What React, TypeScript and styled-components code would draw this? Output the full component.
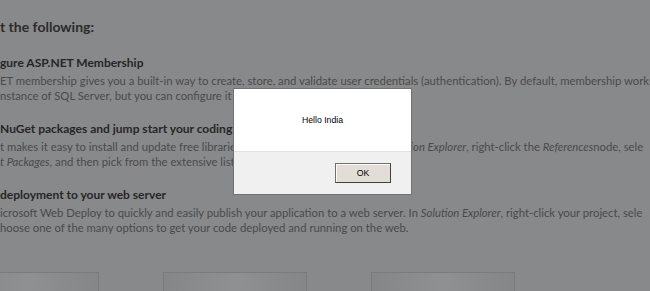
import React from 'react';
import styled, { createGlobalStyle } from 'styled-components';

const GlobalStyle = createGlobalStyle`
  html, body {
    margin: 0;
    padding: 0;
    background: #88898a;
    overflow: hidden;
  }
`;

const Page = styled.div`
  position: relative;
  width: 650px;
  height: 291px;
  overflow: hidden;
  background: #88898a;
  font-family: Lato, 'Open Sans', sans-serif;
`;

const Content = styled.div`
  padding-top: 17px;
  display: flex;
  flex-direction: column;
`;

const Title = styled.h3`
  margin: 0 0 18px 0;
  font-size: 14px;
  line-height: 20px;
  font-weight: 700;
  color: #2b2b2b;
  white-space: nowrap;
`;

const Section = styled.div`
  margin-bottom: 18px;
`;

const Heading = styled.h4`
  margin: 0 0 2px 0;
  font-size: 12px;
  line-height: 16px;
  font-weight: 700;
  color: #262626;
  white-space: nowrap;
`;

const Line = styled.p`
  margin: 0;
  font-size: 11.3px;
  line-height: 15px;
  color: #4a4a4a;
  white-space: nowrap;
`;

const Boxes = styled.div`
  display: flex;
  gap: 64px;
  margin-left: -45px;
  margin-top: 19px;
`;

const Box = styled.div`
  width: 142px;
  height: 60px;
  flex: none;
  border: 1px solid #7b7b7c;
  background: linear-gradient(90deg, #858687 0%, #8f9091 50%, #858687 100%);
`;

const Dialog = styled.div`
  position: absolute;
  left: 234px;
  top: 89px;
  width: 177px;
  height: 105px;
  display: flex;
  flex-direction: column;
  background: #ffffff;
  box-shadow: 0 0 0 1px #727272;
  font-family: 'Liberation Sans', Arial, sans-serif;
`;

const Message = styled.div`
  height: 62px;
  display: flex;
  align-items: center;
  justify-content: center;
  font-size: 8.7px;
  color: #000;
`;

const Footer = styled.div`
  flex: 1;
  display: flex;
  align-items: center;
  justify-content: flex-end;
  padding-right: 20px;
  background: #f0f0f0;
  border-top: 1px solid #dfdfdf;
`;

const OkButton = styled.button`
  width: 56px;
  height: 20px;
  padding: 0;
  font-family: 'Liberation Sans', Arial, sans-serif;
  font-size: 8.7px;
  color: #000;
  background: #e2ddd7;
  border: 1px solid #707070;
  border-right-color: #404040;
  border-bottom-color: #404040;
  box-shadow: inset 1px 1px 0 #fbfaf8;
`;

export default function App() {
  return (
    <Page>
      <GlobalStyle />
      <Content>
        <Title>t the following:</Title>
        <Section>
          <Heading>gure ASP.NET Membership</Heading>
          <Line>
            ET membership gives you a built-in way to create, store, and validate user credentials (authentication). By default, membership works
          </Line>
          <Line>nstance of SQL Server, but you can configure it to work with any data store.</Line>
        </Section>
        <Section>
          <Heading>NuGet packages and jump start your coding</Heading>
          <Line>
            t makes it easy to install and update free libraries and tools for your project. In <i>Solution Explorer</i>, right-click the <i>References</i>node, sele
          </Line>
          <Line>
            <i>t Packages</i>, and then pick from the extensive list of packages.
          </Line>
        </Section>
        <Section>
          <Heading>deployment to your web server</Heading>
          <Line>
            icrosoft Web Deploy to quickly and easily publish your application to a web server. In <i>Solution Explorer</i>, right-click your project, sele
          </Line>
          <Line>hoose one of the many options to get your code deployed and running on the web.</Line>
        </Section>
        <Boxes>
          <Box />
          <Box />
          <Box />
        </Boxes>
      </Content>
      <Dialog>
        <Message>Hello India</Message>
        <Footer>
          <OkButton>OK</OkButton>
        </Footer>
      </Dialog>
    </Page>
  );
}
